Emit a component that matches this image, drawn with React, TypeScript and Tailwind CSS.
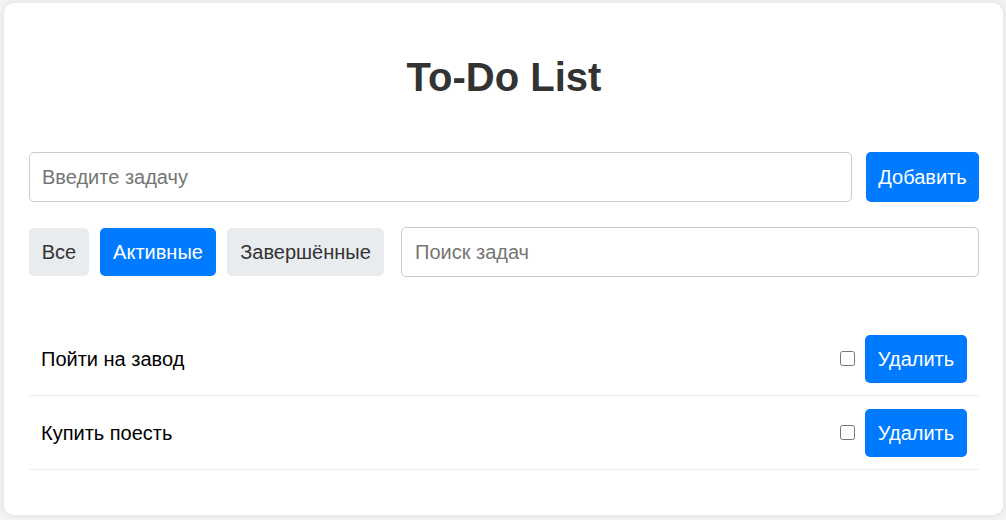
import React, { useState } from "react";

export default function App() {
  const [filter] = useState("active");
  const tasks = ["Пойти на завод", "Купить поесть"];
  return (
    <div
      className="min-h-[520px] w-[1006px] bg-[#f4f4f4] pl-[4px] pt-[3px]"
      style={{ fontFamily: '"Liberation Sans", Arial, sans-serif' }}
    >
      <div className="flex h-[512px] w-[999px] flex-col rounded-[10px] bg-white pl-[25px] pr-[24px] shadow-[0_0_10px_rgba(0,0,0,0.1)]">
        <h1 className="mt-[51px] text-center text-[40px] font-bold leading-[46px] text-[#333]">
          To-Do List
        </h1>
        <div className="mt-[52px] flex h-[50px] gap-[14px]">
          <input
            className="h-[50px] flex-1 rounded-[5px] border border-[#ccc] px-[12px] text-[20px] text-[#333] outline-none placeholder:text-[#757575]"
            placeholder="Введите задачу"
          />
          <button className="h-[50px] w-[113px] rounded-[5px] bg-[#007bff] text-[20px] text-white">
            Добавить
          </button>
        </div>
        <div className="mt-[25px] flex h-[50px] items-center">
          <button className="h-[48px] w-[60px] rounded-[5px] bg-[#e9ecef] text-[20px] text-[#333]">
            Все
          </button>
          <button
            className={
              "ml-[11px] h-[48px] w-[116px] rounded-[5px] text-[20px] " +
              (filter === "active" ? "bg-[#007bff] text-white" : "bg-[#e9ecef] text-[#333]")
            }
          >
            Активные
          </button>
          <button className="ml-[11px] h-[48px] w-[157px] rounded-[5px] bg-[#e9ecef] text-[20px] text-[#333]">
            Завершённые
          </button>
          <input
            className="ml-[17px] h-[50px] flex-1 rounded-[5px] border border-[#ccc] px-[13px] text-[20px] text-[#333] outline-none placeholder:text-[#757575]"
            placeholder="Поиск задач"
          />
        </div>
        <ul className="mt-[45px]">
          {tasks.map((t) => (
            <li
              key={t}
              className="flex h-[74px] items-center border-b border-[#eee] pl-[12px] pr-[12px]"
            >
              <span className="flex-1 text-[20px] text-black">{t}</span>
              <input type="checkbox" className="h-[15px] w-[15px]" />
              <button className="ml-[10px] h-[48px] w-[102px] rounded-[5px] bg-[#007bff] text-[20px] text-white">
                Удалить
              </button>
            </li>
          ))}
        </ul>
      </div>
    </div>
  );
}
